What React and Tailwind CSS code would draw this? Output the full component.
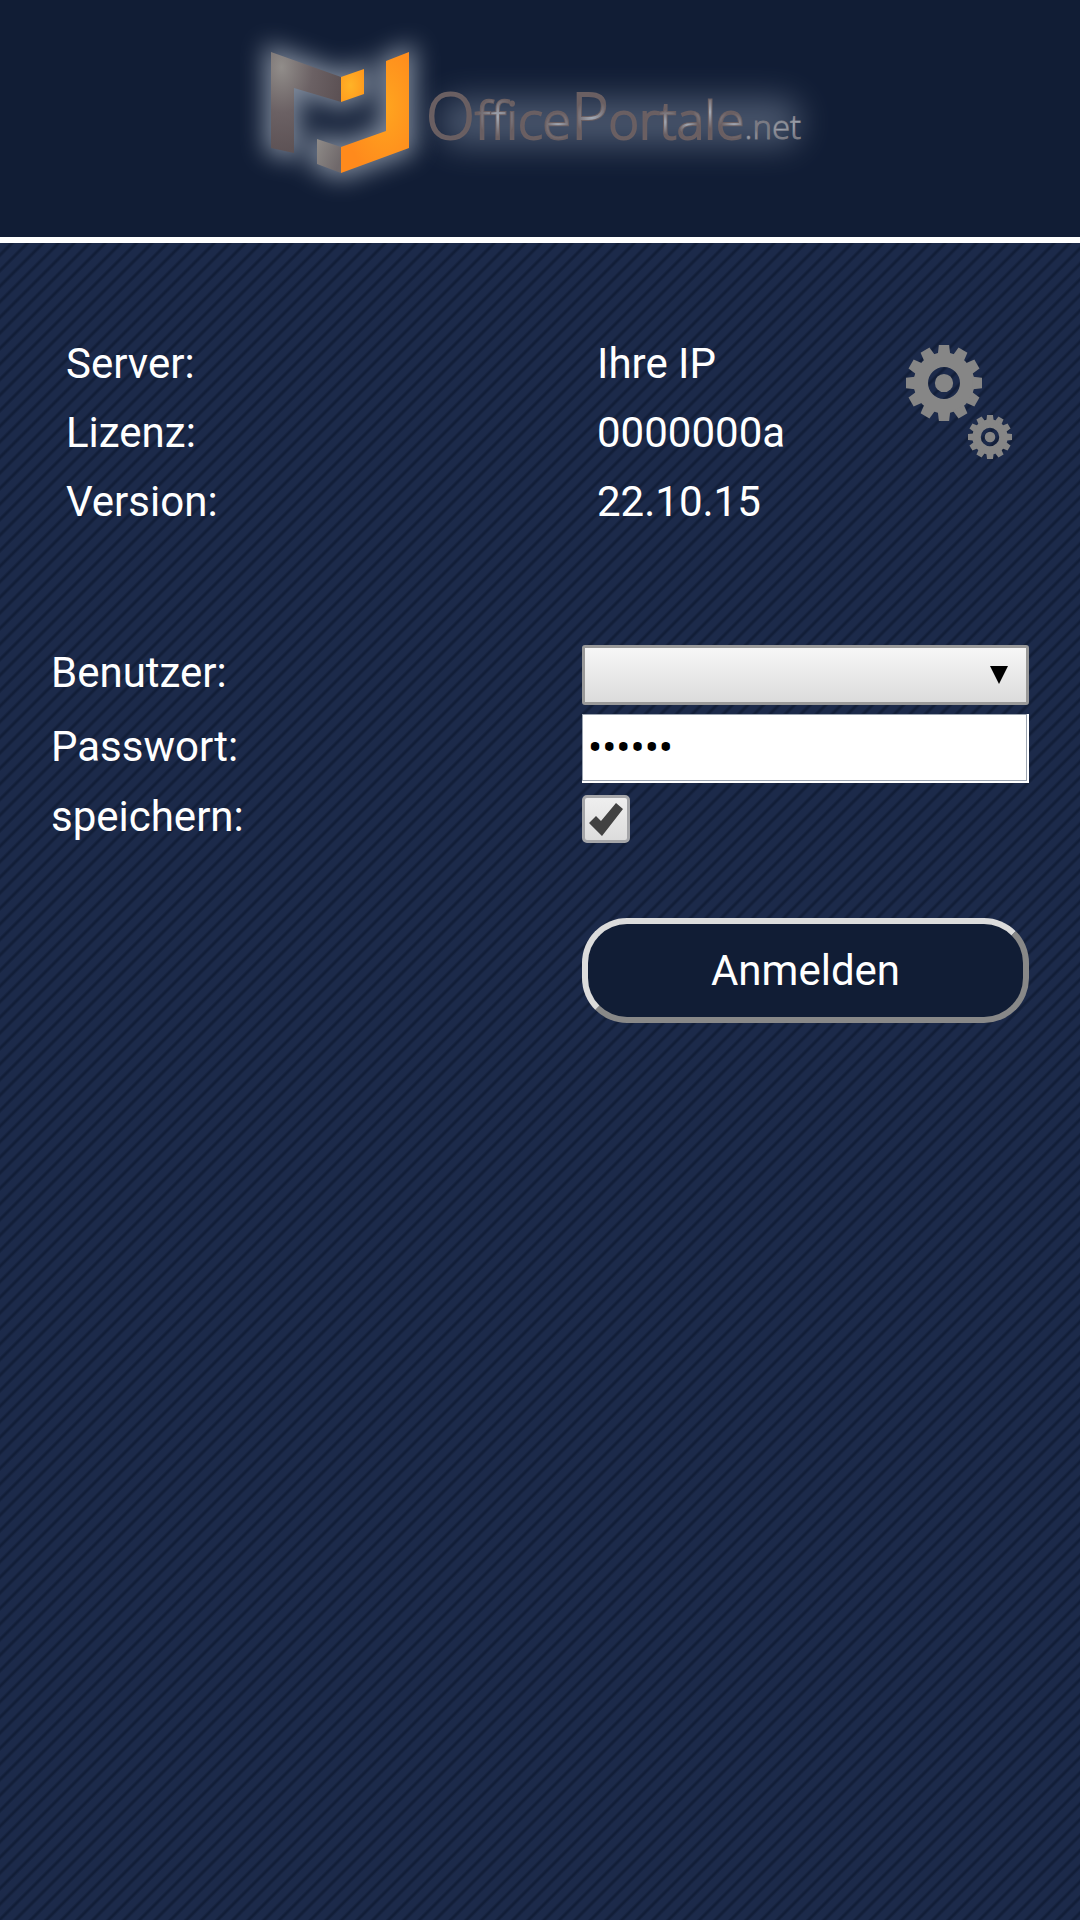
import { useState } from 'react'

const INFO = [
  { label: 'Server:', value: 'Ihre IP' },
  { label: 'Lizenz:', value: '0000000a' },
  { label: 'Version:', value: '22.10.15' },
]

// Light spots that shine through the lettering of the logo
const SPOTS = [
  [257, 97, 20],
  [318, 106, 14],
  [352, 97, 18],
  [427, 102, 13],
  [448, 105, 10],
  [470, 92, 17],
  [494, 106, 13],
  [511, 116, 8],
  [540, 108, 11],
  [557, 105, 13],
]

function Logo() {
  return (
    <svg viewBox="0 0 600 200" className="h-[200px] w-[600px] max-w-full" role="img" aria-label="OfficePortale.net">
      <defs>
        <radialGradient id="grey" cx="0.15" cy="0.15" r="0.9">
          <stop offset="0" stopColor="#918d8a" />
          <stop offset="0.5" stopColor="#6b6164" />
          <stop offset="1" stopColor="#5b5053" />
        </radialGradient>
        <linearGradient id="greySmall" x1="0" y1="0" x2="1" y2="0.6">
          <stop offset="0" stopColor="#8f8b88" />
          <stop offset="1" stopColor="#6f686a" />
        </linearGradient>
        <radialGradient id="orange" cx="0.65" cy="0.45" r="0.6">
          <stop offset="0" stopColor="#ffa51f" />
          <stop offset="1" stopColor="#ff8a1c" />
        </radialGradient>
        <radialGradient id="orangeSmall" cx="0.4" cy="0.5" r="0.7">
          <stop offset="0" stopColor="#ffb327" />
          <stop offset="1" stopColor="#ff981c" />
        </radialGradient>
        <radialGradient id="spot">
          <stop offset="0" stopColor="#a3abb7" />
          <stop offset="1" stopColor="#a3abb7" stopOpacity="0" />
        </radialGradient>
        <filter id="glow" x="-50%" y="-50%" width="200%" height="200%">
          <feGaussianBlur stdDeviation="12" />
        </filter>
        <filter id="textGlow" x="-20%" y="-150%" width="140%" height="400%">
          <feGaussianBlur stdDeviation="16" />
        </filter>
        <clipPath id="lettering">
          <text x="186" y="119" fontSize="52" className="font-['Open_Sans',sans-serif] font-light">
            <tspan fontSize="64">O</tspan>ffice<tspan fontSize="64">P</tspan>ortale<tspan fontSize="33">.net</tspan>
          </text>
        </clipPath>
      </defs>
      <g filter="url(#glow)" fill="#b9c4d2" stroke="#b9c4d2" strokeWidth="12" opacity="0.65">
        <path d="M31 32 L101 57 V82 L54 68 V133 L31 128 Z" />
        <path d="M101 57 L124 49 V74 L101 82 Z" />
        <path d="M146 41 L169 32 V128 L101 153 L77 144 V119 L101 127 L146 111 Z" />
      </g>
      <rect x="200" y="78" width="360" height="48" rx="20" fill="#8593a8" opacity="0.48" filter="url(#textGlow)" />
      <path d="M31 32 L101 57 V82 L54 68 V133 L31 128 Z" fill="url(#grey)" />
      <path d="M101 57 L124 49 V74 L101 82 Z" fill="url(#orangeSmall)" />
      <path d="M77 119 L101 127 V153 L77 144 Z" fill="url(#greySmall)" />
      <path d="M146 41 L169 32 V128 L101 153 V127 L146 111 Z" fill="url(#orange)" />
      <text
        x="186"
        y="119"
        fontSize="52"
        fill="#6a5f62"
        stroke="#6a5f62"
        strokeWidth="2"
        className="font-['Open_Sans',sans-serif] font-light"
      >
        <tspan fontSize="64">O</tspan>ffice<tspan fontSize="64">P</tspan>ortale
        <tspan fontSize="33" fill="#7b7b84" stroke="#7b7b84" strokeWidth="1">.net</tspan>
      </text>
      <g clipPath="url(#lettering)">
        {SPOTS.map(([x, y, r]) => (
          <circle key={x} cx={x} cy={y} r={r} fill="url(#spot)" />
        ))}
      </g>
    </svg>
  )
}

// One cog: twelve teeth around a disc, with a ring cut out of it
function Gear({ cx, cy, r }) {
  const teeth = Array.from({ length: 12 }, (_, i) => i * 30)
  const w = r * 0.27
  return (
    <g transform={`translate(${cx} ${cy})`}>
      <circle r={r * 0.61} fill="none" stroke="#868686" strokeWidth={r * 0.38} />
      <circle r={r * 0.24} fill="#868686" />
      {teeth.map((a) => (
        <path
          key={a}
          transform={`rotate(${a})`}
          d={`M${-w / 2} ${-r} H${w / 2} L${w * 0.6} ${-r * 0.76} H${-w * 0.6} Z`}
          fill="#868686"
        />
      ))}
    </g>
  )
}

export default function App() {
  const [user, setUser] = useState('')
  const [password, setPassword] = useState('123456')
  const [save, setSave] = useState(true)

  return (
    <div className="flex min-h-screen flex-col bg-[#1a2947] font-[Roboto,sans-serif] text-[42px] leading-[50px] text-white">
      <header className="flex justify-center border-b-6 border-white bg-[#111d35] pt-5 pb-[17px]">
        <Logo />
      </header>

      <main className="flex-1 bg-[repeating-linear-gradient(135deg,#1c2a4a_0px,#1c2a4a_6px,#121e38_8px,#121e38_9px,#1c2a4a_11px)] px-[51px] pt-[86px]">
        <section className="flex px-[15px]">
          <dl className="flex-1">
            {INFO.map((row) => (
              <div key={row.label} className="flex h-[69px] items-center">
                <dt className="w-[531px]">{row.label}</dt>
                <dd>{row.value}</dd>
              </div>
            ))}
          </dl>
          <button type="button" aria-label="Einstellungen" className="self-start pt-4">
            <svg viewBox="0 0 108 116" className="h-[116px] w-[108px]">
              <Gear cx={38} cy={38} r={38} />
              <Gear cx={84} cy={92} r={22} />
            </svg>
          </button>
        </section>

        <form className="mt-[109px]" onSubmit={(e) => e.preventDefault()}>
          <div className="flex items-center">
            <label htmlFor="user" className="w-[531px] shrink-0 pb-1">Benutzer:</label>
            <div className="relative min-w-0 flex-1">
              <select
                id="user"
                value={user}
                onChange={(e) => setUser(e.target.value)}
                className="block h-[60px] w-full appearance-none rounded-[3px] border-3 border-[#999] bg-linear-to-b from-[#f7f7f7] to-[#dcdcdc] text-black"
              >
                <option value=""></option>
              </select>
              <svg viewBox="0 0 18 18" className="pointer-events-none absolute top-[21px] right-[21px] size-[18px]">
                <path d="M0 0 H18 L9 18 Z" fill="#000" />
              </svg>
            </div>
          </div>
          <div className="mt-[9px] flex items-center">
            <label htmlFor="password" className="w-[531px] shrink-0 pb-1">Passwort:</label>
            <div className="min-w-0 flex-1 border-r-2 border-b-2 border-white">
              <input
                id="password"
                type="password"
                value={password}
                onChange={(e) => setPassword(e.target.value)}
                className="block h-[67px] w-full border border-[#9aa3b0] bg-white px-[5px] text-black"
              />
            </div>
          </div>
          <div className="flex h-[72px] items-center">
            <label htmlFor="save" className="w-[531px] shrink-0 pb-1">speichern:</label>
            <div className="relative size-12">
              <input
                id="save"
                type="checkbox"
                checked={save}
                onChange={(e) => setSave(e.target.checked)}
                className="block size-12 appearance-none rounded-[5px] border-3 border-[#a5a6a9] bg-linear-to-b from-[#efefef] to-[#dcdcdc]"
              />
              {save && (
                <svg viewBox="0 0 48 48" className="pointer-events-none absolute inset-0 size-12">
                  <path d="M7 28 L14 21 L19 26 L34 8 L41 14 L20 41 Z" fill="#424242" />
                </svg>
              )}
            </div>
          </div>
          <div className="mt-[63px] flex">
            <div className="w-[531px] shrink-0" />
            <button
              type="submit"
              className="h-[105px] min-w-0 flex-1 rounded-[45px] border-6 border-t-[#dcdcdc] border-r-[#888] border-b-[#888] border-l-[#dcdcdc] bg-[#111d35]"
            >
              Anmelden
            </button>
          </div>
        </form>
      </main>
    </div>
  )
}
